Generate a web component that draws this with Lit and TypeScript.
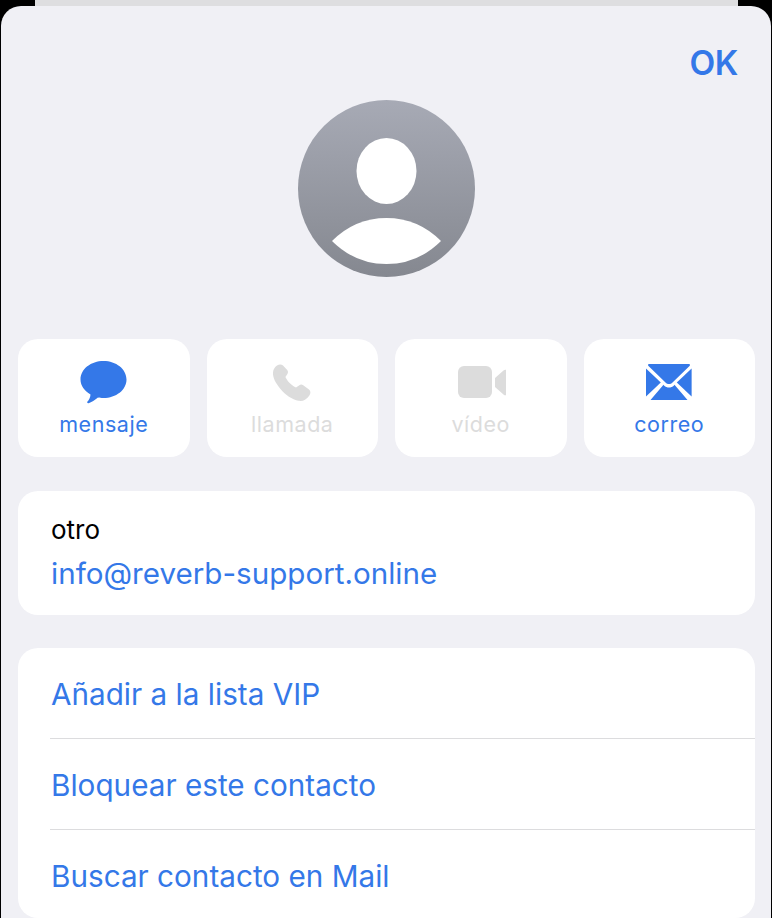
import { LitElement, html, css } from "lit";
import { customElement } from "lit/decorators.js";

@customElement("app-root")
export class AppRoot extends LitElement {
  static styles = css`
    :host {
      display: block;
      width: 772px;
      height: 918px;
      overflow: hidden;
      background: #000;
      font-family: Inter, "Liberation Sans", sans-serif;
    }
    .strip {
      height: 6px;
      margin: 0 34px 0 35px;
      background: #dedee0;
    }
    .sheet {
      height: 912px;
      margin: 0 1px;
      border-radius: 20px 20px 0 0;
      background: #f0f0f5;
      box-sizing: border-box;
      padding: 0 16px 0 17px;
      display: flex;
      flex-direction: column;
      overflow: hidden;
    }
    .sheet > * {
      flex: none;
    }
    .top {
      display: flex;
      justify-content: flex-end;
      padding: 37px 17px 0 0;
      height: 57px;
      box-sizing: border-box;
    }
    .ok {
      font-size: 33.5px;
      line-height: 40px;
      font-weight: 600;
      color: #3478e8;
      letter-spacing: -0.4px;
    }
    .avatar {
      align-self: center;
      margin-top: 37px;
      width: 177px;
      height: 177px;
      display: block;
    }
    .actions {
      display: grid;
      grid-template-columns: repeat(4, 1fr);
      gap: 17px;
      margin-top: 62px;
    }
    .action {
      height: 118px;
      background: #fff;
      border-radius: 20px;
      display: flex;
      flex-direction: column;
      align-items: center;
      color: #3478e8;
    }
    .action.off {
      color: #dcdcdc;
    }
    .icon {
      height: 54px;
      margin-top: 18px;
      display: block;
    }
    .label {
      font-size: 21.5px;
      line-height: 26px;
      letter-spacing: 0.55px;
    }
    .card {
      background: #fff;
      border-radius: 20px;
    }
    .contact {
      margin-top: 34px;
      height: 124px;
      padding: 23px 33px 0;
      box-sizing: border-box;
    }
    .kind {
      font-size: 26px;
      line-height: 32px;
      color: #000;
    }
    .email {
      font-size: 29.6px;
      line-height: 40px;
      margin-top: 7px;
      color: #3478e8;
    }
    .list {
      margin-top: 33px;
      height: 270px;
      padding-left: 32px;
      box-sizing: border-box;
      overflow: hidden;
    }
    .row {
      height: 91px;
      box-sizing: border-box;
      display: flex;
      align-items: center;
      padding: 2px 0 0 1px;
      font-size: 29.7px;
      color: #3478e8;
      border-bottom: 1px solid #dcdcde;
    }
    .row:last-child {
      height: 88px;
      padding-top: 0;
      padding-top: 3px;
      border-bottom: 0;
    }
  `;

  render() {
    return html`
      <div class="strip"></div>
      <div class="sheet">
        <div class="top"><span class="ok">OK</span></div>
        <svg class="avatar" viewBox="0 0 177 177">
          <defs>
            <linearGradient id="g" x1="0" y1="0" x2="0" y2="1">
              <stop offset="0" stop-color="#a7aab5" />
              <stop offset="1" stop-color="#858890" />
            </linearGradient>
          </defs>
          <circle cx="88.5" cy="88.5" r="88.5" fill="url(#g)" />
          <ellipse cx="88.5" cy="71" rx="30" ry="33" fill="#fff" />
          <path d="M34 141 Q57 118 88.5 118 Q120 118 143 141 Q120 164 88.5 164 Q57 164 34 141 Z" fill="#fff" />
        </svg>
        <div class="actions">
          <div class="action">
            <svg class="icon" width="48" height="54" viewBox="0 0 48 54" fill="currentColor">
              <path d="M23.5 4 C36 4 46.5 12 46.5 22.5 C46.5 33 36 41 23.5 41 C21 41 19.5 40.8 18 40.5 C15 43 11.5 45.5 8.5 46.2 C7.3 46.4 6.8 45.5 7.5 44.6 C9 43 10.3 40.5 10.5 37.5 C4.5 34 0.5 28.5 0.5 22.5 C0.5 12 11 4 23.5 4 Z" />
            </svg>
            <span class="label">mensaje</span>
          </div>
          <div class="action off">
            <svg class="icon" width="40" height="54" viewBox="0 0 40 54" fill="currentColor">
              <path d="M5 8.5 C7 7 9.5 7 11 8.5 L15.2 13 C16.2 14.2 16.2 15.6 15.4 17 L13.4 20 C15.5 24.5 18.5 27.5 24 30.6 L27 28.4 C28.4 27.4 30 27.4 31.2 28.2 L37 32.6 C38.8 34 38.8 36.6 37.4 38.4 C34.8 42.2 31 44.6 26.6 43.8 C20 42.6 13.5 38 8.5 32 C3.5 26 0.6 20.5 1 15.5 C1.2 12.5 2.8 10 5 8.5 Z" />
            </svg>
            <span class="label">llamada</span>
          </div>
          <div class="action off">
            <svg class="icon" width="50" height="54" viewBox="-2 0 50 54" fill="currentColor">
              <rect x="0" y="9" width="34" height="32" rx="6" />
              <path d="M37 21 L45.5 13.5 C47 12 49 12.5 49 14.5 L49 36.5 C49 38.5 47 39 45.5 37.5 L37 30 Z" />
            </svg>
            <span class="label">vídeo</span>
          </div>
          <div class="action">
            <svg class="icon" width="46" height="54" viewBox="0 0 46 54" fill="currentColor">
              <path d="M3 7 H43 C44 7 44.5 8 43.5 9 L26.5 25.5 C24.5 27.5 21.5 27.5 19.5 25.5 L2.5 9 C1.5 8 2 7 3 7 Z" />
              <path d="M0 11.5 L14.8 25.6 L0 39.5 Z" />
              <path d="M45.6 11.5 L30.8 25.6 L45.6 39.5 Z" />
              <path d="M4.5 43 L17.5 27.8 L18 28.4 C21 31.2 25 31.2 28 28.4 L28.5 27.8 L41.5 43 Z" />
            </svg>
            <span class="label">correo</span>
          </div>
        </div>
        <div class="card contact">
          <div class="kind">otro</div>
          <div class="email">info@reverb-support.online</div>
        </div>
        <div class="card list">
          <div class="row">Añadir a la lista VIP</div>
          <div class="row">Bloquear este contacto</div>
          <div class="row">Buscar contacto en Mail</div>
        </div>
      </div>
    `;
  }
}
